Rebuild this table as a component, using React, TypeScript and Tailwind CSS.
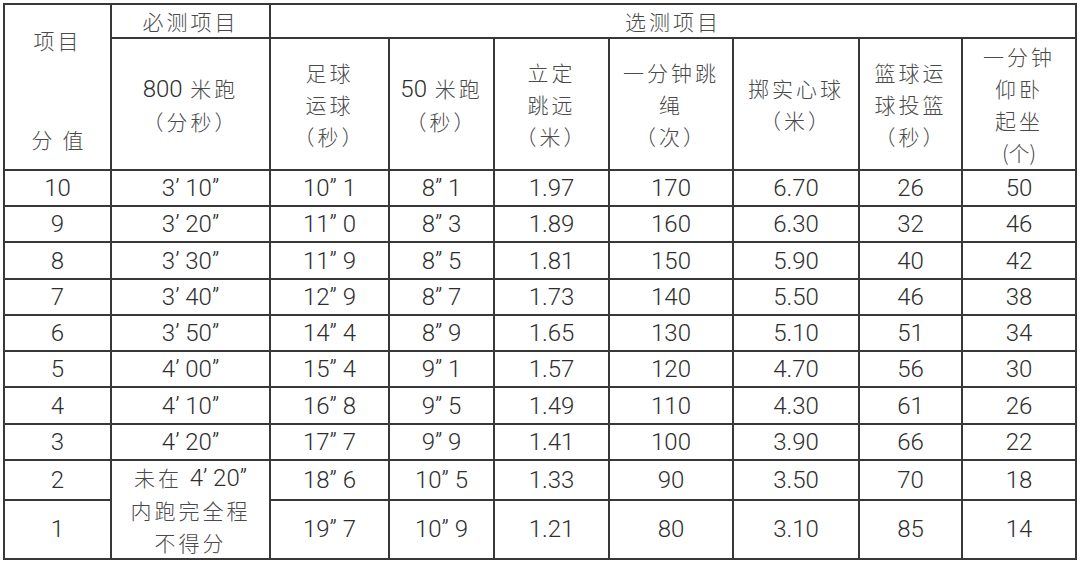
const ROWS: string[][] = [
  ['10', '3’ 10”', '10” 1', '8” 1', '1.97', '170', '6.70', '26', '50'],
  ['9', '3’ 20”', '11” 0', '8” 3', '1.89', '160', '6.30', '32', '46'],
  ['8', '3’ 30”', '11” 9', '8” 5', '1.81', '150', '5.90', '40', '42'],
  ['7', '3’ 40”', '12” 9', '8” 7', '1.73', '140', '5.50', '46', '38'],
  ['6', '3’ 50”', '14” 4', '8” 9', '1.65', '130', '5.10', '51', '34'],
  ['5', '4’ 00”', '15” 4', '9” 1', '1.57', '120', '4.70', '56', '30'],
  ['4', '4’ 10”', '16” 8', '9” 5', '1.49', '110', '4.30', '61', '26'],
  ['3', '4’ 20”', '17” 7', '9” 9', '1.41', '100', '3.90', '66', '22'],
]

const cell = 'border-2 border-[#383838] text-center align-middle p-0'
const num = "text-[24px] leading-none font-light text-[#2e2e2e] font-['Roboto']"
const zh = 'text-[21px] leading-[32px] tracking-[3px] font-light text-[#4a4a4a]'
const inlineNum = "text-[24px] tracking-normal font-light font-['Roboto'] text-[#2e2e2e]"

export default function App() {
  return (
    <div
      className="w-[1080px] h-[562px] bg-white pt-[3px] pl-[3px]"
      style={{ fontFamily: '"Noto Sans CJK SC", "Noto Sans", sans-serif' }}
    >
      <table className="table-fixed border-collapse w-[1072px] border-2 border-[#333]">
        <colgroup>
          <col className="w-[107px]" />
          <col className="w-[159px]" />
          <col className="w-[119px]" />
          <col className="w-[105px]" />
          <col className="w-[115px]" />
          <col className="w-[124px]" />
          <col className="w-[126px]" />
          <col className="w-[103px]" />
          <col className="w-[114px]" />
        </colgroup>
        <thead>
          <tr className="h-[31px]">
            <td rowSpan={2} className={`${cell} align-top`}>
              <div className={`${zh} h-[162px] flex flex-col justify-between items-center pt-[19px] pb-[12px] tracking-[1px]`}>
                <span>项目</span>
                <span className="tracking-[10px] pl-[10px]">分值</span>
              </div>
            </td>
            <td className={`${cell} ${zh}`}>必测项目</td>
            <td colSpan={7} className={`${cell} ${zh}`}>选测项目</td>
          </tr>
          <tr className="h-[132px]">
            <td className={`${cell} ${zh}`}>
              <div><span className={inlineNum}>800</span> 米跑</div>
              <div>（分秒）</div>
            </td>
            <td className={`${cell} ${zh}`}>
              <div>足球</div>
              <div>运球</div>
              <div>（秒）</div>
            </td>
            <td className={`${cell} ${zh}`}>
              <div><span className={inlineNum}>50</span> 米跑</div>
              <div>（秒）</div>
            </td>
            <td className={`${cell} ${zh}`}>
              <div>立定</div>
              <div>跳远</div>
              <div>（米）</div>
            </td>
            <td className={`${cell} ${zh}`}>
              <div>一分钟跳</div>
              <div>绳</div>
              <div>（次）</div>
            </td>
            <td className={`${cell} ${zh}`}>
              <div>掷实心球</div>
              <div>（米）</div>
            </td>
            <td className={`${cell} ${zh}`}>
              <div>篮球运</div>
              <div>球投篮</div>
              <div>（秒）</div>
            </td>
            <td className={`${cell} ${zh}`}>
              <div>一分钟</div>
              <div>仰卧</div>
              <div>起坐</div>
              <div className="tracking-normal">(个)</div>
            </td>
          </tr>
        </thead>
        <tbody>
          {ROWS.map((r, i) => (
            <tr key={r[0]} className={i === 2 || i === 6 ? 'h-[37px]' : 'h-[36px]'}>
              {r.map((v, j) => (
                <td key={j} className={`${cell} ${num}`}>{v}</td>
              ))}
            </tr>
          ))}
          <tr className="h-[36px]">
            <td className={`${cell} ${num}`}>2</td>
            <td rowSpan={2} className={`${cell} ${zh}`}>
              <div>未在 <span className={inlineNum}>4’ 20”</span></div>
              <div>内跑完全程</div>
              <div>不得分</div>
            </td>
            {['18” 6', '10” 5', '1.33', '90', '3.50', '70', '18'].map((v, j) => (
              <td key={j} className={`${cell} ${num}`}>{v}</td>
            ))}
          </tr>
          <tr className="h-[54px]">
            <td className={`${cell} ${num}`}>1</td>
            {['19” 7', '10” 9', '1.21', '80', '3.10', '85', '14'].map((v, j) => (
              <td key={j} className={`${cell} ${num}`}>{v}</td>
            ))}
          </tr>
        </tbody>
      </table>
    </div>
  )
}
